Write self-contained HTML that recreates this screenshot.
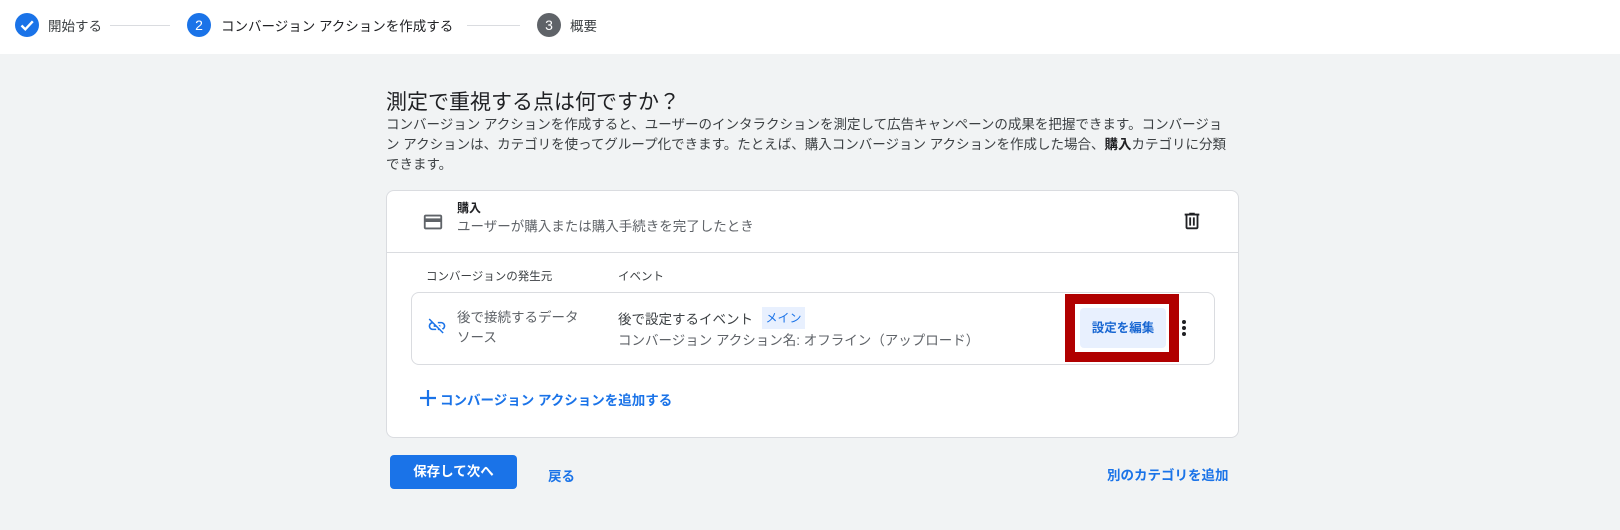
<!DOCTYPE html>
<html><head><meta charset="utf-8"><style>
*{margin:0;padding:0;box-sizing:border-box}
body{width:1620px;height:530px;background:#f1f3f4;font-family:"Liberation Sans","Noto Sans CJK JP",sans-serif;color:#202124;position:relative;overflow:hidden}
.a{position:absolute;white-space:nowrap}
.top{position:absolute;left:0;top:0;width:1620px;height:54px;background:#fff}
.circ{position:absolute;width:24px;height:24px;border-radius:50%;color:#fff;font-size:14px;text-align:center;line-height:24px}
.line{position:absolute;height:1px;background:#dadce0;top:25px}
.st{font-size:13.5px;color:#3c4043;top:15px}
.p{font-size:13.5px;color:#3c4043;left:386px;line-height:20px}
.card{position:absolute;left:386px;top:190px;width:853px;height:248px;background:#fff;border:1px solid #dadce0;border-radius:8px}
.row{position:absolute;left:411px;top:292px;width:804px;height:73px;border:1px solid #dadce0;border-radius:8px;background:#fff}
.blue{color:#1a73e8}
</style></head><body>
<div class="top"></div>
<div class="circ" style="left:15px;top:13px;background:#1a73e8"><svg width="24" height="24" viewBox="0 0 24 24"><path d="M6.5 12.5l3.8 3.8 7.5-8" stroke="#fff" stroke-width="2.4" fill="none"/></svg></div>
<div class="a st" style="left:48px">開始する</div>
<div class="line" style="left:110px;width:60px"></div>
<div class="circ" style="left:187px;top:13px;background:#1a73e8">2</div>
<div class="a st" style="left:221px;color:#202124">コンバージョン アクションを作成する</div>
<div class="line" style="left:467px;width:53px"></div>
<div class="circ" style="left:537px;top:13px;background:#5f6368">3</div>
<div class="a st" style="left:570px">概要</div>

<div class="a" style="left:386px;top:86px;font-size:21px;color:#202124">測定で重視する点は何ですか？</div>
<div class="a p" style="top:115px">コンバージョン アクションを作成すると、ユーザーのインタラクションを測定して広告キャンペーンの成果を把握できます。コンバージョ</div>
<div class="a p" style="top:135px">ン アクションは、カテゴリを使ってグループ化できます。たとえば、購入コンバージョン アクションを作成した場合、<b style="color:#202124">購入</b>カテゴリに分類</div>
<div class="a p" style="top:155px">できます。</div>

<div class="card"></div>
<svg class="a" style="left:422px;top:211px" width="22" height="22" viewBox="0 0 24 24"><path d="M20 4H4c-1.1 0-2 .9-2 2v12c0 1.1.9 2 2 2h16c1.1 0 2-.9 2-2V6c0-1.1-.9-2-2-2zm0 14H4v-6h16v6zm0-10H4V6h16v2z" fill="#5f6368"/></svg>
<div class="a" style="left:457px;top:199px;font-size:12px;font-weight:bold">購入</div>
<div class="a" style="left:457px;top:215px;font-size:13.5px;color:#5f6368">ユーザーが購入または購入手続きを完了したとき</div>
<svg class="a" style="left:1181px;top:210px" width="22" height="22" viewBox="0 0 24 24"><path d="M15 4V3H9v1H4v2h1v13c0 1.1.9 2 2 2h10c1.1 0 2-.9 2-2V6h1V4h-5zm2 15H7V6h10v13zM9 8h2v9H9zm4 0h2v9h-2z" fill="#202124"/></svg>
<div class="a" style="left:387px;top:252px;width:851px;height:1px;background:#dadce0"></div>
<div class="a" style="left:426px;top:268px;font-size:11.5px;color:#3c4043">コンバージョンの発生元</div>
<div class="a" style="left:618px;top:268px;font-size:11.5px;color:#3c4043">イベント</div>
<div class="row"></div>
<svg class="a" style="left:427px;top:316px" width="20" height="20" viewBox="0 0 24 24"><path d="M17 7h-4v1.9h4c1.71 0 3.1 1.39 3.1 3.1 0 1.43-.98 2.63-2.31 2.98l1.46 1.46C20.88 15.61 22 13.95 22 12c0-2.76-2.24-5-5-5zm-1 4h-2.19l2 2H16v-2zM2 4.27l3.11 3.11C3.29 8.12 2 9.91 2 12c0 2.76 2.24 5 5 5h4v-1.9H7c-1.71 0-3.1-1.39-3.1-3.1 0-1.59 1.21-2.9 2.76-3.07L8.73 11H8v2h2.73L13 15.27V17h1.73l4.01 4L20 19.74 3.27 3 2 4.270z" fill="#1a73e8"/></svg>
<div class="a" style="left:457px;top:308px;font-size:13.5px;color:#5f6368;line-height:20px">後で接続するデータ<br>ソース</div>
<div class="a" style="left:618px;top:308px;font-size:13.5px;color:#3c4043">後で設定するイベント</div>
<div class="a" style="left:762px;top:307px;width:43px;height:22px;background:#e8f0fe;color:#1a73e8;font-size:12px;line-height:22px;text-align:center">メイン</div>
<div class="a" style="left:618px;top:329px;font-size:13.5px;color:#5f6368">コンバージョン アクション名: オフライン（アップロード）</div>
<div class="a" style="left:1065px;top:294px;width:114px;height:68px;border:10px solid #b00000;background:#fff"></div>
<div class="a" style="left:1080px;top:308px;width:86px;height:40px;background:#e8f0fe;border-radius:4px;color:#1967d2;font-size:12.5px;font-weight:bold;line-height:40px;text-align:center">設定を編集</div>
<svg class="a" style="left:1178px;top:318px" width="12" height="22" viewBox="0 0 12 22"><circle cx="6" cy="4" r="2" fill="#202124"/><circle cx="6" cy="10" r="2" fill="#202124"/><circle cx="6" cy="16" r="2" fill="#202124"/></svg>
<svg class="a" style="left:419px;top:389px" width="18" height="18" viewBox="0 0 18 18"><path d="M9 1v16M1 9h16" stroke="#1a73e8" stroke-width="2.2"/></svg>
<div class="a blue" style="left:440px;top:389px;font-size:13.5px;font-weight:bold">コンバージョン アクションを追加する</div>

<div class="a" style="left:390px;top:455px;width:127px;height:34px;background:#1a73e8;border-radius:4px;color:#fff;font-size:13.5px;font-weight:bold;text-align:center;line-height:34px">保存して次へ</div>
<div class="a blue" style="left:548px;top:465px;font-size:13.5px;font-weight:bold">戻る</div>
<div class="a blue" style="left:1107px;top:464px;font-size:13.5px;font-weight:bold">別のカテゴリを追加</div>
</body></html>
